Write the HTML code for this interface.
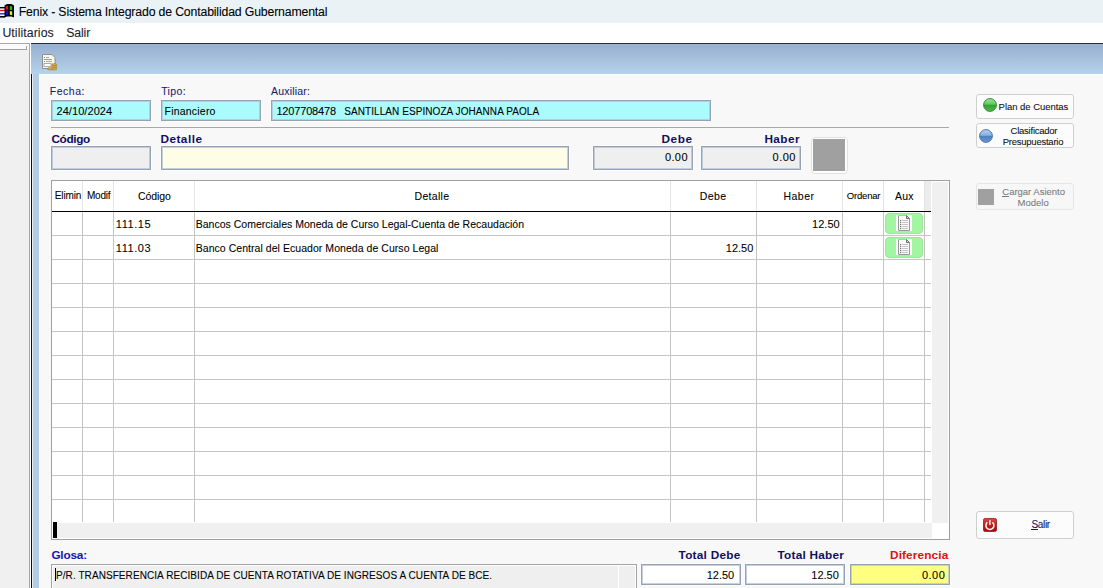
<!DOCTYPE html>
<html><head><meta charset="utf-8">
<style>
*{margin:0;padding:0;box-sizing:border-box}
html,body{width:1103px;height:588px;overflow:hidden;background:#f8f8f8;font-family:"Liberation Sans",sans-serif;color:#000}
.a{position:absolute}
.t{position:absolute;white-space:nowrap;line-height:1}
.box{position:absolute;border:1px solid #96a2b2;box-shadow:0 0 0 1px #fdfdfd,inset 0 0 0 1px rgba(176,194,218,0.75)}
.cyan{background:#aafcfc}
.gray{background:#efefef}
.btn{position:absolute;border:1px solid #cfcfcf;border-radius:3px;background:#fcfcfc}
</style></head><body>

<!-- title bar -->
<div class="a" style="left:0;top:0;width:1103px;height:23px;background:#eaf2f5"></div>
<div class="a" style="left:0;top:23px;width:1103px;height:20px;background:#fff"></div>

<!-- left panel -->
<div class="a" style="left:0;top:43px;width:30px;height:545px;background:#f0f0f0;border-top:1px solid #a8a8a8;border-right:1px solid #a8a8a8"></div>
<div class="a" style="left:0;top:44px;width:29px;height:5px;background:#fafafa"></div>
<div class="a" style="left:0;top:49px;width:27px;height:1px;background:#a0a0a0"></div>
<div class="a" style="left:26px;top:46px;width:1px;height:4px;background:#a0a0a0"></div>
<div class="a" style="left:30px;top:43px;width:1px;height:545px;background:#fff"></div>

<!-- mdi child -->
<div class="a" style="left:31px;top:43px;width:1072px;height:1px;background:#2a2e36"></div>
<div class="a" style="left:31px;top:44px;width:1072px;height:30px;background:linear-gradient(#97afd0,#b6d2ea)"></div>
<div class="a" style="left:31px;top:74px;width:1px;height:514px;background:#111"></div>
<div class="a" style="left:32px;top:74px;width:1px;height:514px;background:#e6eef6"></div>
<div class="a" style="left:33px;top:74px;width:6px;height:514px;background:#b4cde6"></div>
<div class="a" style="left:39px;top:74px;width:1064px;height:514px;background:#f8f8f8;border-top:1px solid #fdfdfd"></div>

<!-- header labels -->
<div class="box cyan" style="left:51px;top:100px;width:100px;height:21px"></div>
<div class="box cyan" style="left:161px;top:100px;width:100px;height:21px"></div>
<div class="box cyan" style="left:271px;top:100px;width:440px;height:21px"></div>
<div class="a" style="left:51px;top:127px;width:898px;height:1px;background:#a8a8a8"></div>

<div class="box gray" style="left:51px;top:146px;width:100px;height:24px"></div>
<div class="box" style="left:161px;top:146px;width:408px;height:24px;background:#fefee6"></div>
<div class="box gray" style="left:593px;top:146px;width:100px;height:24px"></div>
<div class="box gray" style="left:701px;top:146px;width:100px;height:24px"></div>
<div class="a" style="left:811px;top:137px;width:37px;height:37px;border:1px solid #e0e0e0;border-radius:4px;background:#fefefe"></div>
<div class="a" style="left:813px;top:139px;width:32px;height:32px;background:#a0a0a0"></div>

<!-- grid -->
<div class="a" style="left:51px;top:180px;width:899px;height:360px;border:1px solid #a0a0a0;background:#fff"></div>
<div class="a" style="left:932px;top:182px;width:16px;height:341px;background:#f0f0f0"></div>
<div class="a" style="left:57px;top:523px;width:875px;height:15px;background:#f0f0f0"></div>
<div class="a" style="left:53px;top:522px;width:4px;height:16px;background:#000"></div>
<div class="a" style="left:82px;top:181px;width:1px;height:30px;background:#e4e4e4"></div>
<div class="a" style="left:82px;top:212px;width:1px;height:310px;background:#c4c4c4"></div>
<div class="a" style="left:113px;top:181px;width:1px;height:30px;background:#e4e4e4"></div>
<div class="a" style="left:113px;top:212px;width:1px;height:310px;background:#c4c4c4"></div>
<div class="a" style="left:194px;top:181px;width:1px;height:30px;background:#e4e4e4"></div>
<div class="a" style="left:194px;top:212px;width:1px;height:310px;background:#c4c4c4"></div>
<div class="a" style="left:670px;top:181px;width:1px;height:30px;background:#e4e4e4"></div>
<div class="a" style="left:670px;top:212px;width:1px;height:310px;background:#c4c4c4"></div>
<div class="a" style="left:756px;top:181px;width:1px;height:30px;background:#e4e4e4"></div>
<div class="a" style="left:756px;top:212px;width:1px;height:310px;background:#c4c4c4"></div>
<div class="a" style="left:842px;top:181px;width:1px;height:30px;background:#e4e4e4"></div>
<div class="a" style="left:842px;top:212px;width:1px;height:310px;background:#c4c4c4"></div>
<div class="a" style="left:883px;top:181px;width:1px;height:30px;background:#e4e4e4"></div>
<div class="a" style="left:883px;top:212px;width:1px;height:310px;background:#c4c4c4"></div>
<div class="a" style="left:924px;top:181px;width:1px;height:30px;background:#e4e4e4"></div>
<div class="a" style="left:924px;top:212px;width:1px;height:310px;background:#c4c4c4"></div>
<div class="a" style="left:925px;top:181px;width:6px;height:30px;background:#ececec"></div>
<div class="a" style="left:52px;top:211px;width:879px;height:1px;background:#000"></div>
<div class="a" style="left:52px;top:235px;width:879px;height:1px;background:#c4c4c4"></div>
<div class="a" style="left:52px;top:259px;width:879px;height:1px;background:#c4c4c4"></div>
<div class="a" style="left:52px;top:283px;width:879px;height:1px;background:#c4c4c4"></div>
<div class="a" style="left:52px;top:307px;width:879px;height:1px;background:#c4c4c4"></div>
<div class="a" style="left:52px;top:331px;width:879px;height:1px;background:#c4c4c4"></div>
<div class="a" style="left:52px;top:355px;width:879px;height:1px;background:#c4c4c4"></div>
<div class="a" style="left:52px;top:379px;width:879px;height:1px;background:#c4c4c4"></div>
<div class="a" style="left:52px;top:403px;width:879px;height:1px;background:#c4c4c4"></div>
<div class="a" style="left:52px;top:427px;width:879px;height:1px;background:#c4c4c4"></div>
<div class="a" style="left:52px;top:451px;width:879px;height:1px;background:#c4c4c4"></div>
<div class="a" style="left:52px;top:475px;width:879px;height:1px;background:#c4c4c4"></div>
<div class="a" style="left:52px;top:499px;width:879px;height:1px;background:#c4c4c4"></div>


<!-- glosa / totals -->
<div class="a" style="left:51px;top:564px;width:586px;height:30px;border:1px solid #a4a4a4;background:#efefef;box-shadow:inset 0 0 0 1px #fff"></div>
<div class="a" style="left:618px;top:565px;width:1px;height:30px;background:#fff"></div>
<div class="box" style="left:641px;top:564px;width:100px;height:21px;background:#fff"></div>
<div class="box" style="left:745px;top:564px;width:100px;height:21px;background:#fff"></div>
<div class="box" style="left:850px;top:564px;width:100px;height:21px;background:#ffff80"></div>

<!-- right buttons -->
<div class="btn" style="left:976px;top:94px;width:98px;height:25px"></div>
<div class="btn" style="left:976px;top:123px;width:98px;height:25px"></div>
<div class="btn" style="left:976px;top:183px;width:98px;height:27px;background:#f7f7f7;border-color:#e6e6e6"></div>
<div class="btn" style="left:976px;top:511px;width:98px;height:28px"></div>
<!-- icons: title -->
<svg class="a" style="left:0;top:2px" width="16" height="18" viewBox="0 0 16 18">
<rect x="0" y="5" width="5" height="10.5" fill="#fff"/>
<rect x="0" y="5" width="5" height="1.4" fill="#000"/>
<path d="M0 7.8h5v1.4h-5z" fill="#d81818"/>
<path d="M0 11.2h5v1.3h-5z" fill="#1414c8"/>
<rect x="0" y="14" width="5" height="1.6" fill="#000"/>
<path d="M4.5 3.6 L7 2 L11.5 2 L14 3.6 L14 15.6 L11.5 14.4 L7 14.4 L4.5 15.6 Z" fill="#000"/>
<path d="M5.7 4 L8 3.7 L8 7.6 L5.7 7.8 Z" fill="#d81c1c"/>
<path d="M9.8 3.9 L12.2 4.4 L12.2 8.2 L9.8 7.8 Z" fill="#22c422"/>
<path d="M5.7 8.8 L8.2 8.6 L8.2 12.9 L5.7 13.1 Z" fill="#1414c4"/>
<path d="M9.8 8.9 L12.2 9.4 L12.2 13.2 L9.8 12.8 Z" fill="#e8e820"/>
</svg>
<!-- icons: mdi doc -->
<svg class="a" style="left:42px;top:54px" width="16" height="17" viewBox="0 0 16 17">
<path d="M0.5 0.5 H10 L13 3.5 V14.5 H0.5 Z" fill="#f6f6ea" stroke="#8c9090" stroke-width="1"/>
<rect x="2" y="3" width="1" height="1" fill="#888"/><rect x="4" y="3" width="3" height="1" fill="#aaa"/>
<rect x="2" y="5" width="8" height="1" fill="#9a9a9a"/>
<rect x="2" y="7" width="1" height="1" fill="#888"/><rect x="4" y="7" width="6" height="1" fill="#aaa"/>
<rect x="2" y="9.5" width="7" height="3" fill="#fff" stroke="#999" stroke-width="0.8"/>
<g fill="#d8b050" stroke="#9a7020" stroke-width="0.6">
<rect x="9.6" y="9.8" width="5" height="2" rx="1"/>
<rect x="9.6" y="11.8" width="5" height="2" rx="1"/>
<rect x="9.6" y="13.8" width="5" height="2" rx="1"/>
<rect x="5.6" y="13.8" width="4.5" height="2" rx="1"/>
</g>
</svg>

<!-- grid header texts -->
<!-- rows -->
<!-- aux buttons -->
<div class="a" style="left:885px;top:213px;width:38px;height:21px;border-radius:4px;background:#a2f6a2;border:1px solid #98e898"></div>
<div class="a" style="left:885px;top:237px;width:38px;height:21px;border-radius:4px;background:#a2f6a2;border:1px solid #98e898"></div>
<svg class="a" style="left:896px;top:215px" width="16" height="17" viewBox="0 0 16 17">
<rect x="0" y="0" width="16" height="16" fill="#fbfbfb"/>
<path d="M10.5 0.5 H2.5 V15.5 H13.5 V3.5" fill="none" stroke="#8c8c8c" stroke-width="0.9"/>
<path d="M2.5 0.5 H10.5" stroke="#c4c4c4" stroke-width="0.9"/>
<path d="M10.5 0.5 L13.5 3.5 M10.5 0.5 V3.5 H13.5" fill="#d8d8d8" stroke="#6a6a6a" stroke-width="0.9"/>
<g fill="#707070"><rect x="4" y="5" width="1.2" height="1.2"/><rect x="4" y="7" width="1.2" height="1.2"/><rect x="4" y="9" width="1.2" height="1.2"/><rect x="4" y="11" width="1.2" height="1.2"/><rect x="4" y="13" width="1.2" height="1.2"/></g>
<g fill="#c4c4c4"><rect x="6" y="5" width="6" height="1"/><rect x="6" y="7" width="6" height="1"/><rect x="6" y="9" width="6" height="1"/><rect x="6" y="11" width="6" height="1"/><rect x="6" y="13" width="6" height="1"/></g>
</svg>
<svg class="a" style="left:896px;top:239px" width="16" height="17" viewBox="0 0 16 17">
<rect x="0" y="0" width="16" height="16" fill="#fbfbfb"/>
<path d="M10.5 0.5 H2.5 V15.5 H13.5 V3.5" fill="none" stroke="#8c8c8c" stroke-width="0.9"/>
<path d="M2.5 0.5 H10.5" stroke="#c4c4c4" stroke-width="0.9"/>
<path d="M10.5 0.5 L13.5 3.5 M10.5 0.5 V3.5 H13.5" fill="#d8d8d8" stroke="#6a6a6a" stroke-width="0.9"/>
<g fill="#707070"><rect x="4" y="5" width="1.2" height="1.2"/><rect x="4" y="7" width="1.2" height="1.2"/><rect x="4" y="9" width="1.2" height="1.2"/><rect x="4" y="11" width="1.2" height="1.2"/><rect x="4" y="13" width="1.2" height="1.2"/></g>
<g fill="#c4c4c4"><rect x="6" y="5" width="6" height="1"/><rect x="6" y="7" width="6" height="1"/><rect x="6" y="9" width="6" height="1"/><rect x="6" y="11" width="6" height="1"/><rect x="6" y="13" width="6" height="1"/></g>
</svg>

<!-- right button contents -->
<svg class="a" style="left:983px;top:98px" width="14" height="14" viewBox="0 0 14 14">
<defs><linearGradient id="gg" x1="0" y1="0" x2="0" y2="1"><stop offset="0" stop-color="#9ae89a"/><stop offset="0.45" stop-color="#5cc85c"/><stop offset="0.5" stop-color="#2e9e2e"/><stop offset="0.85" stop-color="#44b444"/><stop offset="1" stop-color="#58c058"/></linearGradient></defs>
<circle cx="7" cy="7" r="6.4" fill="url(#gg)" stroke="#2c7c2c" stroke-width="0.9"/>
</svg>
<svg class="a" style="left:979px;top:129px" width="14" height="14" viewBox="0 0 14 14">
<defs><linearGradient id="bg" x1="0" y1="0" x2="0" y2="1"><stop offset="0" stop-color="#b4d2f4"/><stop offset="0.45" stop-color="#84b0e4"/><stop offset="0.5" stop-color="#4e80c0"/><stop offset="0.85" stop-color="#5e90cc"/><stop offset="1" stop-color="#78a4d8"/></linearGradient></defs>
<circle cx="7" cy="7" r="6.4" fill="url(#bg)" stroke="#466ca0" stroke-width="0.9"/>
</svg>
<div class="a" style="left:978px;top:189px;width:16px;height:16px;background:#a0a0a0"></div>
<svg class="a" style="left:983px;top:518px" width="14" height="14" viewBox="0 0 14 14">
<defs><linearGradient id="rg" x1="0" y1="0" x2="0" y2="1"><stop offset="0" stop-color="#e04848"/><stop offset="0.5" stop-color="#c01c1c"/><stop offset="1" stop-color="#a40c0c"/></linearGradient></defs>
<rect x="0.4" y="0.4" width="13.2" height="13.2" rx="2" fill="url(#rg)" stroke="#8a1010" stroke-width="0.8"/>
<path d="M4.33 4.44 A4 4 0 1 0 9.47 4.44" fill="none" stroke="#fff" stroke-width="1.5"/>
<rect x="6.2" y="2.1" width="1.4" height="5" fill="#fff"/>
</svg>
<div class="a" style="left:1002px;top:196px;width:7px;height:1px;background:#7a7a7a"></div>
<div class="a" style="left:1031px;top:529px;width:7px;height:1px;background:#14145a"></div>
<div class="a" style="left:55px;top:568px;width:1px;height:13px;background:#000"></div>
<div class="t" style="left:18.7px;top:6px;color:#000;font-size:12.3px;font-weight:400;letter-spacing:-0.167px;-webkit-text-stroke:0.08px currentColor">Fenix - Sistema Integrado de Contabilidad Gubernamental</div>
<div class="t" style="left:2.4px;top:27px;color:#1a1a30;font-size:12.3px;font-weight:400;letter-spacing:0.080px;-webkit-text-stroke:0.08px currentColor">Utilitarios</div>
<div class="t" style="left:66.3px;top:27px;color:#1a1a30;font-size:12.3px;font-weight:400;letter-spacing:-0.150px;-webkit-text-stroke:0.08px currentColor">Salir</div>
<div class="t" style="left:49.7px;top:86px;color:#1c1c70;font-size:10.5px;font-weight:400;letter-spacing:0.540px;-webkit-text-stroke:0.08px currentColor">Fecha:</div>
<div class="t" style="left:161.2px;top:86px;color:#1c1c70;font-size:10.5px;font-weight:400;letter-spacing:0.375px;-webkit-text-stroke:0.08px currentColor">Tipo:</div>
<div class="t" style="left:271.1px;top:86px;color:#1c1c70;font-size:10.5px;font-weight:400;letter-spacing:0.188px;-webkit-text-stroke:0.08px currentColor">Auxiliar:</div>
<div class="t" style="left:56.5px;top:106px;color:#000;font-size:11.0px;font-weight:400;letter-spacing:0.067px;-webkit-text-stroke:0.08px currentColor">24/10/2024</div>
<div class="t" style="left:164.6px;top:106px;color:#000;font-size:10.5px;font-weight:400;letter-spacing:0.200px;-webkit-text-stroke:0.08px currentColor">Financiero</div>
<div class="t" style="left:276.4px;top:106px;color:#000;font-size:11.0px;font-weight:400;letter-spacing:-0.167px;-webkit-text-stroke:0.08px currentColor">1207708478</div>
<div class="t" style="left:344.3px;top:107px;color:#000;font-size:10.0px;font-weight:400;letter-spacing:0.068px;-webkit-text-stroke:0.08px currentColor">SANTILLAN ESPINOZA JOHANNA PAOLA</div>
<div class="t" style="left:51.4px;top:134px;color:#101060;font-size:11.8px;font-weight:700;letter-spacing:-0.360px">Código</div>
<div class="t" style="left:160.4px;top:134px;color:#101060;font-size:11.8px;font-weight:700;letter-spacing:0.483px">Detalle</div>
<div class="t" style="left:661.4px;top:134px;color:#101060;font-size:11.8px;font-weight:700;letter-spacing:0.600px">Debe</div>
<div class="t" style="left:764.4px;top:134px;color:#101060;font-size:11.8px;font-weight:700;letter-spacing:0.450px">Haber</div>
<div class="t" style="left:664.9px;top:152px;color:#000;font-size:11.0px;font-weight:400;letter-spacing:0.400px;-webkit-text-stroke:0.08px currentColor">0.00</div>
<div class="t" style="left:772.6px;top:152px;color:#000;font-size:11.0px;font-weight:400;letter-spacing:0.467px;-webkit-text-stroke:0.08px currentColor">0.00</div>
<div class="t" style="left:54.8px;top:191px;color:#000;font-size:10px;font-weight:400;letter-spacing:-0.140px;-webkit-text-stroke:0.08px currentColor">Elimin</div>
<div class="t" style="left:86.9px;top:191px;color:#000;font-size:10px;font-weight:400;letter-spacing:-0.175px;-webkit-text-stroke:0.08px currentColor">Modif</div>
<div class="t" style="left:137.9px;top:191px;color:#000;font-size:10.5px;font-weight:400;letter-spacing:-0.080px;-webkit-text-stroke:0.08px currentColor">Código</div>
<div class="t" style="left:414.6px;top:191px;color:#000;font-size:10.5px;font-weight:400;letter-spacing:0.300px;-webkit-text-stroke:0.08px currentColor">Detalle</div>
<div class="t" style="left:699.8px;top:191px;color:#000;font-size:10.5px;font-weight:400;letter-spacing:0.433px;-webkit-text-stroke:0.08px currentColor">Debe</div>
<div class="t" style="left:783.5px;top:191px;color:#000;font-size:10.5px;font-weight:400;letter-spacing:0.475px;-webkit-text-stroke:0.08px currentColor">Haber</div>
<div class="t" style="left:846.7px;top:191px;color:#000;font-size:9.5px;font-weight:400;letter-spacing:-0.167px;-webkit-text-stroke:0.08px currentColor">Ordenar</div>
<div class="t" style="left:895.1px;top:191px;color:#000;font-size:10.5px;font-weight:400;letter-spacing:0.200px;-webkit-text-stroke:0.08px currentColor">Aux</div>
<div class="t" style="left:115.8px;top:219px;color:#000;font-size:11.0px;font-weight:400;letter-spacing:0.560px;-webkit-text-stroke:0.08px currentColor">111.15</div>
<div class="t" style="left:195.7px;top:219px;color:#000;font-size:10.5px;font-weight:400;letter-spacing:0.015px;-webkit-text-stroke:0.08px currentColor">Bancos Comerciales Moneda de Curso Legal-Cuenta de Recaudación</div>
<div class="t" style="left:812.1px;top:219px;color:#000;font-size:11.0px;font-weight:400;letter-spacing:0.000px;-webkit-text-stroke:0.08px currentColor">12.50</div>
<div class="t" style="left:115.8px;top:243px;color:#000;font-size:11.0px;font-weight:400;letter-spacing:0.560px;-webkit-text-stroke:0.08px currentColor">111.03</div>
<div class="t" style="left:195.7px;top:243px;color:#000;font-size:10.5px;font-weight:400;letter-spacing:0.048px;-webkit-text-stroke:0.08px currentColor">Banco Central del Ecuador Moneda de Curso Legal</div>
<div class="t" style="left:725.8px;top:243px;color:#000;font-size:11.0px;font-weight:400;letter-spacing:0.000px;-webkit-text-stroke:0.08px currentColor">12.50</div>
<div class="t" style="left:51.4px;top:550px;color:#1414b4;font-size:11.8px;font-weight:700;letter-spacing:-0.200px">Glosa:</div>
<div class="t" style="left:678.6px;top:550px;color:#101060;font-size:11.8px;font-weight:700;letter-spacing:0.244px">Total Debe</div>
<div class="t" style="left:777.5px;top:550px;color:#101060;font-size:11.8px;font-weight:700;letter-spacing:0.240px">Total Haber</div>
<div class="t" style="left:890.0px;top:550px;color:#e01010;font-size:11.8px;font-weight:700;letter-spacing:0.133px">Diferencia</div>
<div class="t" style="left:56.0px;top:571px;color:#000;font-size:10.0px;font-weight:400;letter-spacing:0.074px;-webkit-text-stroke:0.08px currentColor">P/R. TRANSFERENCIA RECIBIDA DE CUENTA ROTATIVA DE INGRESOS A CUENTA DE BCE.</div>
<div class="t" style="left:706.7px;top:570px;color:#000;font-size:11.0px;font-weight:400;letter-spacing:0.000px;-webkit-text-stroke:0.08px currentColor">12.50</div>
<div class="t" style="left:811.3px;top:570px;color:#000;font-size:11.0px;font-weight:400;letter-spacing:0.000px;-webkit-text-stroke:0.08px currentColor">12.50</div>
<div class="t" style="left:921.9px;top:570px;color:#000;font-size:11.0px;font-weight:400;letter-spacing:0.500px;-webkit-text-stroke:0.08px currentColor">0.00</div>
<div class="t" style="left:998.6px;top:102px;color:#111;font-size:9.5px;font-weight:400;letter-spacing:-0.036px;-webkit-text-stroke:0.08px currentColor">Plan de Cuentas</div>
<div class="t" style="left:1010.6px;top:126px;color:#111;font-size:9.5px;font-weight:400;letter-spacing:-0.245px;-webkit-text-stroke:0.08px currentColor">Clasificador</div>
<div class="t" style="left:1002.7px;top:137px;color:#111;font-size:9.5px;font-weight:400;letter-spacing:-0.238px;-webkit-text-stroke:0.08px currentColor">Presupuestario</div>
<div class="t" style="left:1002.3px;top:187px;color:#7a7a7a;font-size:9.5px;font-weight:400;letter-spacing:-0.015px;-webkit-text-stroke:0.08px currentColor">Cargar Asiento</div>
<div class="t" style="left:1017.6px;top:198px;color:#7a7a7a;font-size:9.5px;font-weight:400;letter-spacing:-0.000px;-webkit-text-stroke:0.08px currentColor">Modelo</div>
<div class="t" style="left:1031.4px;top:520px;color:#14145a;font-size:10px;font-weight:400;letter-spacing:-0.300px;-webkit-text-stroke:0.08px currentColor">Salir</div>
</body></html>
